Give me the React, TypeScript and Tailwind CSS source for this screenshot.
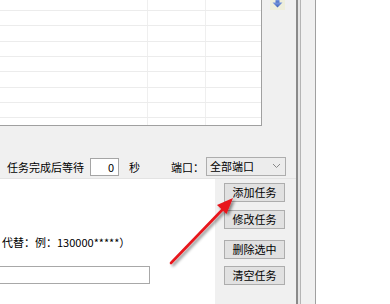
import React from "react";

const font = { fontFamily: '"Noto Sans CJK SC", "Microsoft YaHei", sans-serif' };

function Table() {
  const rows = [11, 15, 16, 15, 15, 16, 15, 15];
  return (
    <div className="w-[262px] h-[126px] bg-white border-r border-b border-[#a0a0a0] flex flex-col overflow-hidden">
      {rows.map((h, i) => (
        <div key={i} className="flex border-b border-[#ececec] shrink-0" style={{ height: h }}>
          <div className="w-[148px] border-r border-[#efefef]" />
          <div className="w-[58px] border-r border-[#efefef]" />
          <div className="flex-1" />
        </div>
      ))}
      <div className="flex flex-1">
        <div className="w-[148px] border-r border-[#efefef]" />
        <div className="w-[58px] border-r border-[#efefef]" />
        <div className="flex-1" />
      </div>
    </div>
  );
}

function Btn({ label }: { label: string }) {
  return (
    <div className="w-[61px] h-[19px] bg-[#e1e1e1] border border-[#adadad] flex items-center justify-center text-[11px] text-black leading-none whitespace-nowrap">
      {label}
    </div>
  );
}

export default function App() {
  return (
    <div className="relative w-[390px] h-[304px] flex overflow-hidden bg-white" style={font}>
      <div className="w-[296px] h-full bg-[#f0f0f0] flex flex-col shrink-0">
        <div className="flex h-[126px] shrink-0">
          <Table />
          <div className="ml-[8px] w-[15px] h-[10px] bg-[#eeeedc] flex justify-center">
            <svg width="11" height="8" viewBox="0 0 11 8">
              <defs>
                <linearGradient id="bl" x1="0" y1="0" x2="0" y2="1">
                  <stop offset="0" stopColor="#7c9be0" />
                  <stop offset="1" stopColor="#3a5fb8" />
                </linearGradient>
              </defs>
              <rect x="3.5" y="0" width="4" height="3" fill="url(#bl)" />
              <path d="M0.5 2.5 L10.5 2.5 L5.5 7.5 Z" fill="url(#bl)" />
            </svg>
          </div>
        </div>
        <div className="h-[53px] shrink-0 flex flex-col justify-end pb-[1px] border-b border-[#e3e3e3]">
          <div className="h-[20px] flex items-center text-[11px] text-black whitespace-nowrap">
            <span className="ml-[7px] w-[77px] shrink-0">任务完成后等待</span>
            <div className="ml-[6px] w-[29px] h-[18px] shrink-0 bg-white border border-[#a5a5a5] flex items-center justify-end pr-[4px] text-[11px]">
              0
            </div>
            <span className="ml-[10px] w-[12px] shrink-0">秒</span>
            <span className="ml-[30px] w-[35px] shrink-0">端口：</span>
            <div className="w-[80px] h-[19px] shrink-0 bg-[#ececec] border border-[#adadad] flex items-center pl-[3px] pr-[4px] -mt-[2px]">
              <span className="flex-1">全部端口</span>
              <svg width="9" height="6" viewBox="0 0 9 6">
                <path d="M1 1 L4.5 4.5 L8 1" stroke="#888" strokeWidth="1" fill="none" />
              </svg>
            </div>
          </div>
        </div>
        <div className="flex flex-1">
          <div className="w-[215px] h-full bg-white flex flex-col">
            <div className="mt-[56px] h-[14px] leading-[14px] text-[11px] text-black pl-[2px] whitespace-nowrap">
              代替：例：130000*****）
            </div>
            <div className="mt-[17px] w-[150px] h-[18px] bg-white border border-l-0 border-[#a8a8a8]" />
          </div>
          <div className="ml-[9px] pt-[4px] flex flex-col">
            <Btn label="添加任务" />
            <div className="mt-[8px]"><Btn label="修改任务" /></div>
            <div className="mt-[11px]"><Btn label="删除选中" /></div>
            <div className="mt-[7px]"><Btn label="清空任务" /></div>
          </div>
        </div>
      </div>
      <div className="w-[2px] h-full bg-[#8a8a8a]" />
      <div className="w-[2px] h-full bg-[#e6e6e6]" />
      <div className="w-[1px] h-full bg-[#b4b4b4]" />
      <div className="w-[14px] h-full bg-[#f0f0f0]" />
      <div className="w-[1px] h-full bg-[#a0a0a0]" />
      <div className="flex-1 h-full bg-white" />

      <svg className="absolute left-0 top-0 pointer-events-none" width="390" height="304" viewBox="0 0 390 304">
        <defs>
          <filter id="sh" x="-50%" y="-50%" width="200%" height="200%">
            <feDropShadow dx="2" dy="2" stdDeviation="1.5" floodColor="#000" floodOpacity="0.45" />
          </filter>
        </defs>
        <g filter="url(#sh)">
          <line x1="171" y1="263" x2="224" y2="208" stroke="#e8141b" strokeWidth="2.6" strokeLinecap="round" />
          <path d="M233 198 L226.5 214 L217 205 Z" fill="#e8141b" />
        </g>
      </svg>
    </div>
  );
}
